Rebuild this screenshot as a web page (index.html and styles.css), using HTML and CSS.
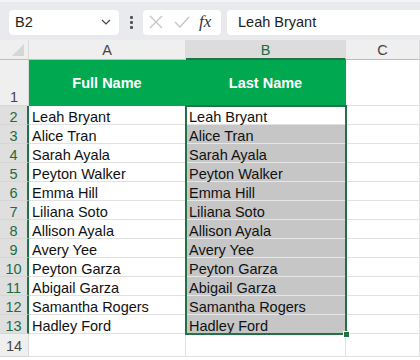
FILE: index.html
```html
<!DOCTYPE html>
<html lang="en">
  <head>
    <meta charset="UTF-8" />
    <title>Names</title>
    <link rel="stylesheet" href="styles.css">
  </head>
  <body>
    <div class="toolbar">
      <div class="name-box">
        <span>B2</span>
        <svg class="chevron" width="10" height="6" viewBox="0 0 10 6"><path d="M1 1l4 4 4-4" fill="none" stroke="#444" stroke-width="1.2"/></svg>
      </div>
      <div class="dots"><i></i><i></i><i></i></div>
      <div class="fx-box">
        <svg width="14" height="14" viewBox="0 0 14 14"><path d="M1 1l12 12M13 1L1 13" stroke="#c4c4c4" stroke-width="1.3"/></svg>
        <svg width="16" height="12" viewBox="0 0 16 12"><path d="M1 6l5 5L15 1" fill="none" stroke="#c4c4c4" stroke-width="1.3"/></svg>
        <span class="fx">fx</span>
      </div>
      <div class="formula">Leah Bryant</div>
    </div>

    <div class="sheet">
      <div class="corner"><span class="tri"></span></div>
      <div class="col-head">A</div>
      <div class="col-head selected">B</div>
      <div class="col-head">C</div>

      <div class="row-head tall">1</div>
      <div class="cell title">Full Name</div>
      <div class="cell title">Last Name</div>
      <div class="cell"></div>
    </div>
    <div class="sheet" id="rows"></div>

    <script>
      const names = [
        "Leah Bryant", "Alice Tran", "Sarah Ayala", "Peyton Walker",
        "Emma Hill", "Liliana Soto", "Allison Ayala", "Avery Yee",
        "Peyton Garza", "Abigail Garza", "Samantha Rogers", "Hadley Ford"
      ];
      const rows = document.getElementById("rows");
      let html = "";
      names.forEach((name, i) => {
        const fill = i === 0 ? "" : " picked";
        html += `<div class="row-head on">${i + 2}</div>
          <div class="cell">${name}</div>
          <div class="cell${fill}">${name}</div>
          <div class="cell"></div>`;
      });
      html += `<div class="row-head last">14</div><div class="cell last"></div><div class="cell last"></div><div class="cell last"></div>`;
      html += `<div class="selection"><span class="handle"></span></div>`;
      rows.innerHTML = html;
    </script>
  </body>
</html>
```

FILE: styles.css
```css
body {
  margin: 0;
  font-family: "Liberation Sans", Arial, sans-serif;
  background: #fff;
  width: 420px;
  height: 360px;
  overflow: hidden;
}

.toolbar {
  height: 38px;
  background: #e8eaed;
  border-top: 2px solid #f3f4f6;
  display: flex;
  align-items: center;
  padding: 0 0 0 9px;
}

.name-box {
  width: 110px;
  height: 25px;
  box-sizing: border-box;
  background: #fff;
  border-radius: 4px;
  display: flex;
  align-items: center;
  justify-content: space-between;
  padding: 0 8px 0 6px;
  font-size: 14.5px;
  color: #222;
  margin-top: 2px;
}

.dots {
  width: 24px;
  display: flex;
  flex-direction: column;
  align-items: center;
  gap: 2px;
  margin-top: 2px;
}

.dots i {
  width: 3px;
  height: 3px;
  background: #555;
  border-radius: 1px;
}

.fx-box {
  width: 78px;
  height: 25px;
  box-sizing: border-box;
  background: #fff;
  border-radius: 4px;
  display: flex;
  align-items: center;
  gap: 11px;
  padding-left: 6px;
  margin-top: 2px;
}

.fx {
  font-family: "Liberation Serif", serif;
  font-style: italic;
  font-size: 17px;
  color: #333;
  margin-left: -2px;
}

.formula {
  flex: 1;
  height: 25px;
  background: #fff;
  border-radius: 4px 0 0 4px;
  margin-left: 6px;
  margin-top: 2px;
  display: flex;
  align-items: center;
  padding-left: 11px;
  font-size: 14.5px;
  color: #222;
}

.sheet {
  display: grid;
  grid-template-columns: 29px 157px 160px 74px;
  position: relative;
}

.corner,
.col-head {
  height: 19px;
  background: #efefef;
  border-right: 1px solid #dadada;
  border-bottom: 1px solid #bdbdbd;
  font-size: 14.5px;
  color: #444;
  text-align: center;
  line-height: 21px;
}

.corner {
  position: relative;
}

.tri {
  position: absolute;
  right: 4px;
  bottom: 3px;
  width: 0;
  height: 0;
  border-left: 12px solid transparent;
  border-bottom: 12px solid #d6d6d6;
}

.col-head.selected {
  background: #dcdcdc;
  color: #1e6b41;
  border-bottom: 2px solid #217346;
  height: 18px;
}

.row-head {
  height: 18px;
  background: #efefef;
  border-right: 1px solid #dadada;
  border-bottom: 1px solid #d6d6d6;
  font-size: 14.5px;
  color: #444;
  text-align: center;
  line-height: 22px;
}

.row-head.tall {
  height: 45px;
  line-height: 74px;
}

.row-head.on {
  background: #dfdfdf;
  color: #1e6b41;
  border-right: 2px solid #217346;
  width: 27px;
}

.row-head.last {
  height: 22px;
  line-height: 25px;
}

.cell {
  height: 18px;
  border-right: 1px solid #e1e1e1;
  border-bottom: 1px solid #e1e1e1;
  font-size: 14.5px;
  color: #111;
  padding-left: 3px;
  line-height: 22px;
  white-space: nowrap;
}

.cell.last {
  height: 22px;
}

.title {
  height: 45px;
  background: #00a94f;
  border-color: #00a94f;
  color: #fff;
  font-weight: bold;
  text-align: center;
  line-height: 46px;
  padding: 0;
}

.row-head.tall + .title + .title + .cell {
  height: 45px;
}

.picked {
  background: #c6c6c6;
  border-color: #c6c6c6;
  border-bottom-color: #e6e6e6;
}

.selection {
  position: absolute;
  left: 185px;
  top: -1px;
  width: 158px;
  height: 226px;
  border: 2px solid #217346;
  pointer-events: none;
}

.handle {
  position: absolute;
  right: -5px;
  bottom: -5px;
  width: 5px;
  height: 5px;
  background: #217346;
  border: 1px solid #fff;
}
```
